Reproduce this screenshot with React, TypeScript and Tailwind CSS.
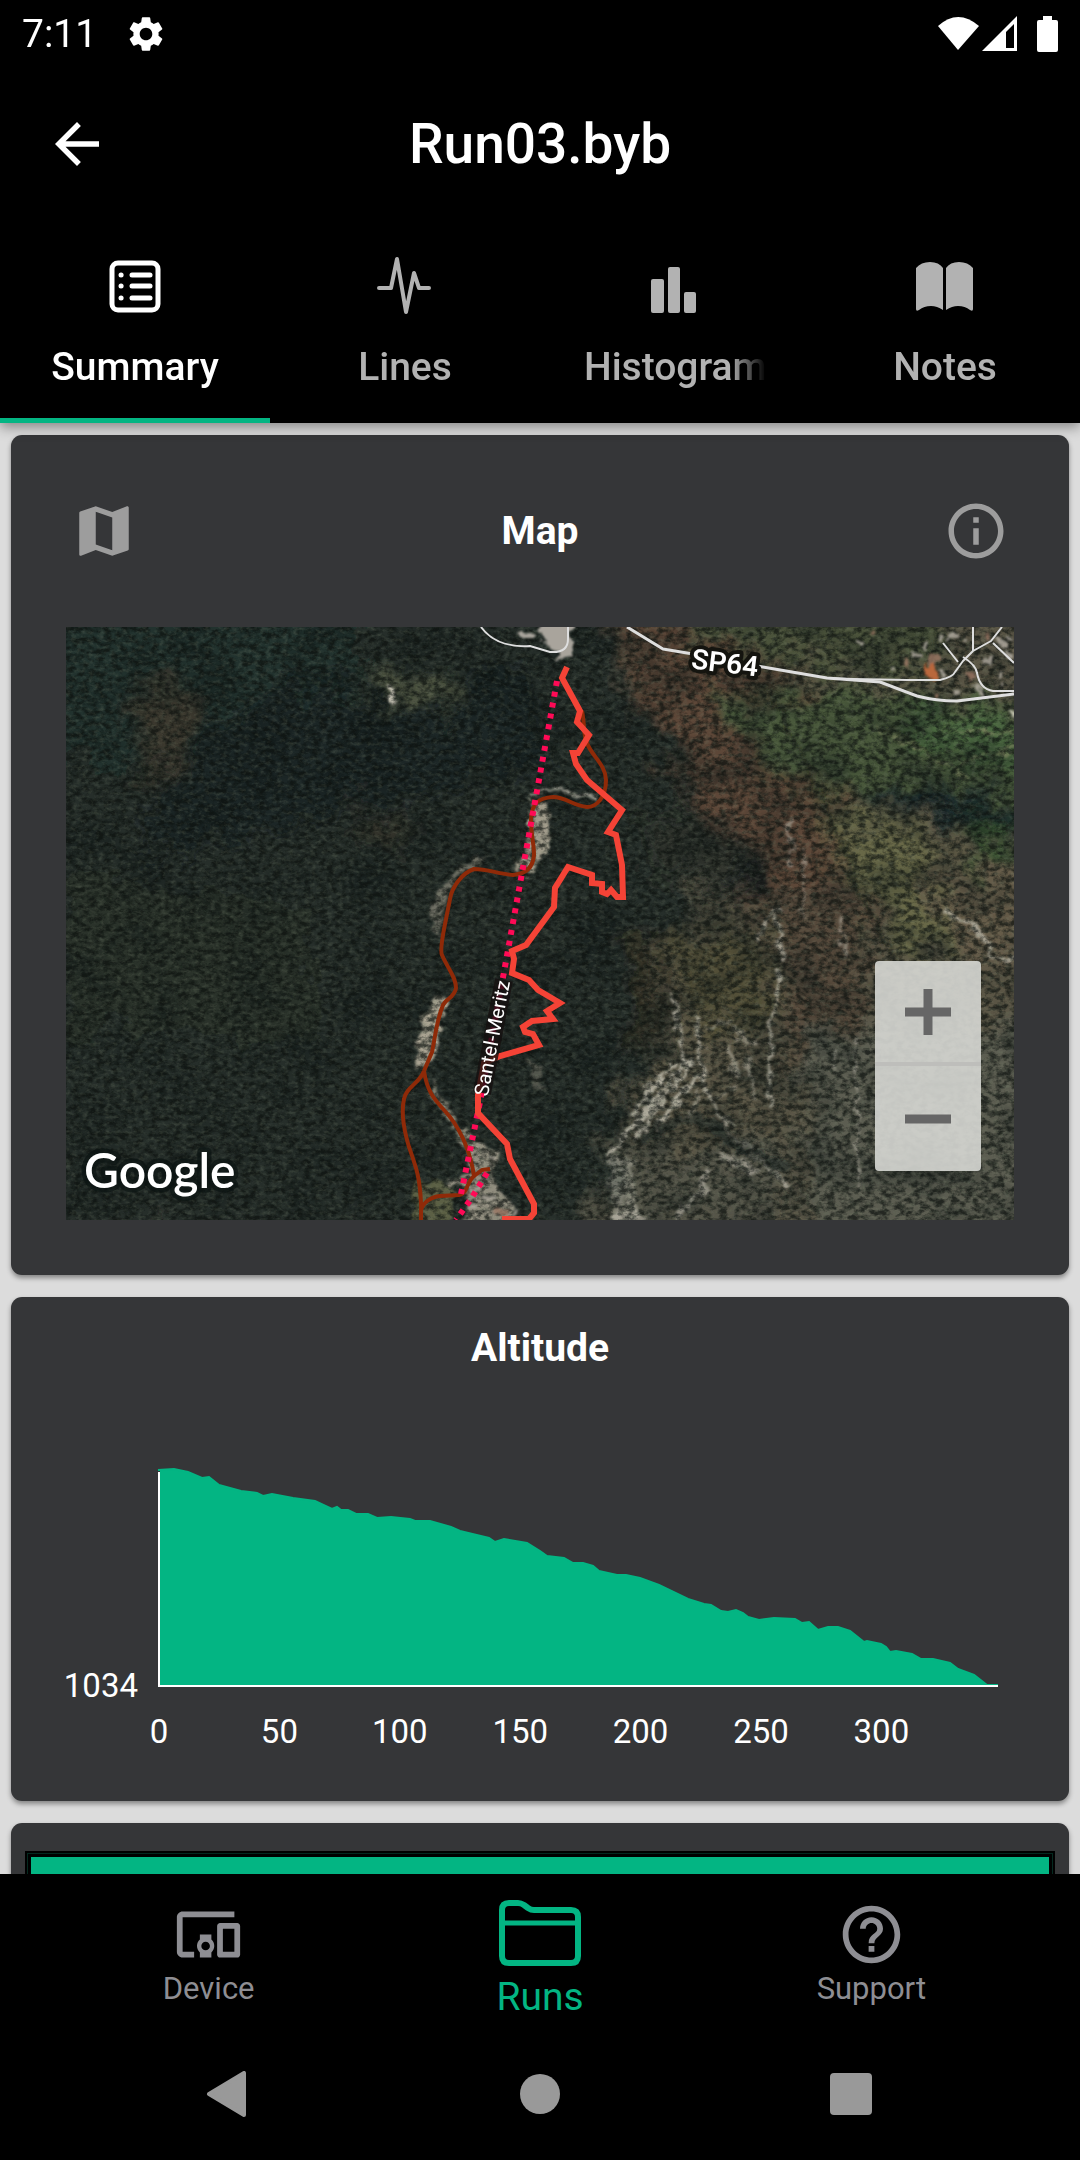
import React, { useState } from 'react';
import { MdArrowBack, MdDevicesOther, MdHelpOutline, MdInfoOutline, MdMap, MdSettings } from 'react-icons/md';

const SummaryIcon = () => (
  <svg className="h-[66px] w-[66px]" viewBox="0 0 66 66" fill="none" stroke="currentColor" strokeLinecap="round">
    <rect x="10" y="10" width="46" height="47" rx="6" strokeWidth="5" />
    {[22, 33, 45].map((y) => (
      <g key={y} strokeWidth="5">
        <path d={`M19 ${y}h.1`} />
        <path d={`M30 ${y}h18`} />
      </g>
    ))}
  </svg>
);

const LinesIcon = () => (
  <svg className="h-[66px] w-[66px]" viewBox="0 0 66 66" fill="none" stroke="currentColor" strokeWidth="4" strokeLinecap="round" strokeLinejoin="round">
    <path d="M7 35H19L25 6L34 59L42 20L47 35H57" />
  </svg>
);

const HistogramIcon = () => (
  <svg className="h-[66px] w-[66px]" viewBox="0 0 66 66" fill="currentColor">
    <rect x="9" y="26" width="13" height="34" rx="2" />
    <rect x="26" y="14" width="12" height="46" rx="2" />
    <rect x="42" y="39" width="12" height="21" rx="2" />
  </svg>
);

const NotesIcon = () => (
  <svg className="h-[66px] w-[66px]" viewBox="0 0 66 66" fill="currentColor">
    <path d="M4 15Q9 9 18 9Q27 9 31 15V57Q25 53 19 53Q12 53 7 57Q4 59 4 56Z" />
    <path d="M34 15Q38 9 47 9Q56 9 61 15V56Q61 59 58 57Q53 53 46 53Q40 53 34 57Z" />
  </svg>
);

const FolderIcon = () => (
  <svg className="h-[72px] w-[84px]" viewBox="0 0 84 72" fill="none" stroke="currentColor" strokeWidth="6" strokeLinejoin="round">
    <path d="M4 13Q4 6 11 6H20Q23 6 26 8L30 11Q33 13 36 13H73Q80 13 80 20V59Q80 66 73 66H11Q4 66 4 59Z" />
    <path d="M4 26H80" strokeWidth="5" />
  </svg>
);

const tabs = [
  { label: 'Summary', icon: <SummaryIcon /> },
  { label: 'Lines', icon: <LinesIcon /> },
  { label: 'Histograms', icon: <HistogramIcon /> },
  { label: 'Notes', icon: <NotesIcon /> },
];

const track =
  'M501 40L496 51L514 84L511 95L523 108L512 126H507L510 137L521 153L556 183L542 205L550 208L556 238L557 270H551L545 263L541 267L536 265V257L526 256V248L502 240L489 261L488 280L460 318L446 324L448 332L446 346L463 353L472 363L494 376L481 384L487 392L466 394L457 400L459 405L467 407L473 418L434 429L418 436L412 468V486L441 517L444 532L468 577V586L463 592H436';

const trails = [
  'M516 84C519 98 517 110 521 116C525 128 540 138 540 153C540 170 531 180 521 180C507 179 500 170 487 170C472 171 466 176 465 192C465 210 468 216 468 228C467 242 458 247 447 248C432 247 422 242 408 242C396 246 386 260 384 272L379 297C376 312 374 324 376 328C382 342 390 350 390 361C389 370 380 372 377 378C370 395 369 412 366 425L358 444',
  'M358 444C354 456 340 460 338 472C334 490 340 510 343 520C350 540 354 550 355 577V593',
  'M358 444C361 464 368 472 378 483C396 502 405 528 408 549C400 556 402 566 393 568L374 569C364 570 357 576 355 583',
  'M408 549L416 543L424 542',
];

const roads = [
  'M415 0C428 18 450 20 464 19L484 25C498 26 502 20 502 12V0',
  'M561 0L597 22L627 27L691 39L761 51L814 55L851 69Q870 74 891 74L948 67',
  'M761 51L787 52L841 53L874 53Q887 50 889 45L897 34L907 24L925 14L936 0',
  'M897 30Q910 38 911 46Q914 62 927 64H948',
  'M907 0V24M927 16L948 36M877 16L892 35',
];

const houses = [
  [862, 30, 9], [872, 8, 6], [846, 26, 7], [884, 6, 6], [918, 6, 7], [930, 12, 8], [940, 24, 8], [856, 16, 6],
  [902, 46, 7], [918, 32, 8], [930, 46, 6], [876, 44, 6], [838, 36, 5], [942, 6, 5], [888, 64, 6], [910, 60, 6],
  [868, 68, 5], [826, 42, 5], [934, 56, 5], [790, 14, 5], [806, 6, 5], [896, 12, 6],
  [408, 560, 7], [420, 566, 6], [430, 582, 8], [404, 578, 6], [446, 584, 5], [422, 528, 5], [398, 562, 6],
];

const SatelliteMap = () => (
  <svg className="block w-full" viewBox="0 0 948 593" role="img" aria-label="Run map">
    <defs>
      <filter id="land" x="-10%" y="-10%" width="120%" height="120%">
        <feGaussianBlur stdDeviation="9" result="soft" />
        <feTurbulence type="fractalNoise" baseFrequency="0.03" numOctaves="4" seed="3" />
        <feDisplacementMap in="soft" scale="60" xChannelSelector="R" yChannelSelector="G" />
      </filter>
      <filter id="rough" x="-20%" y="-20%" width="140%" height="140%">
        <feTurbulence type="fractalNoise" baseFrequency="0.08" numOctaves="4" seed="8" />
        <feDisplacementMap in="SourceGraphic" scale="16" xChannelSelector="R" yChannelSelector="G" />
        <feGaussianBlur stdDeviation="1.2" />
      </filter>
      <filter id="darkGrain" x="0" y="0" width="100%" height="100%" colorInterpolationFilters="sRGB">
        <feTurbulence type="fractalNoise" baseFrequency="0.13 0.18" numOctaves="4" seed="5" />
        <feColorMatrix values="0 0 0 0 0.05  0 0 0 0 0.07  0 0 0 0 0.06  3 0 0 0 -1.1" />
        <feGaussianBlur stdDeviation="0.6" />
      </filter>
      <filter id="lightGrain" x="0" y="0" width="100%" height="100%" colorInterpolationFilters="sRGB">
        <feTurbulence type="fractalNoise" baseFrequency="0.18 0.26" numOctaves="3" seed="14" />
        <feColorMatrix values="0 0 0 0 0.46  0 0 0 0 0.5  0 0 0 0 0.42  0 2.4 0 0 -1.1" />
        <feGaussianBlur stdDeviation="0.6" />
      </filter>
      <filter id="patches" x="0" y="0" width="100%" height="100%" colorInterpolationFilters="sRGB">
        <feTurbulence type="fractalNoise" baseFrequency="0.018 0.025" numOctaves="5" seed="21" />
        <feColorMatrix values="0 0 0 0 0.06  0 0 0 0 0.09  0 0 0 0 0.09  0 0 3 0 -1.3" />
      </filter>
    </defs>

    <rect width="948" height="593" fill="#5a5545" />
    <g filter="url(#land)">
      <path d="M540 -20H700L760 120L800 250L760 330L640 250L590 120Z" fill="#5d4638" />
      <path d="M560 -20H880V40L700 40Z" fill="#4b523a" />
      <path d="M650 70L760 60L980 80V180L800 175L700 150Z" fill="#4a583a" />
      <path d="M820 80L980 90V160L880 130Z" fill="#4b6740" />
      <path d="M770 180L850 155L980 180V205L880 190Z" fill="#18252a" />
      <path d="M900 195H948V240H905Z" fill="#3c5a35" />
      <path d="M750 190L830 190L900 250L880 330L820 310Z" fill="#686747" />
      <path d="M850 240H960V340L900 330Z" fill="#665b4a" />
      <path d="M700 260H800V440H720Z" fill="#56493a" />
      <path d="M610 310L700 300V400H620Z" fill="#525039" />
      <path d="M540 520H720V610H540Z" fill="#54554a" />
      <path d="M740 400H980V610H740Z" fill="#5c5d51" />
      <path d="M-30 -30H530L560 60L620 140L640 220L620 290L596 340L600 420L556 470L530 610H-30Z" fill="#262f29" />
      <path d="M-30 -30H300V60L200 160L-30 130Z" fill="#22332e" />
      <path d="M220 60L460 40L480 140L220 200L80 230V150Z" fill="#1c2725" />
      <path d="M70 60L130 60L130 110L80 170Z" fill="#3a372d" />
      <path d="M300 50L400 55L395 72L310 66Z" fill="#5a6148" />
      <path d="M620 230L710 240L716 280L640 262Z" fill="#1a2224" />
      <path d="M290 180L350 190L340 230L300 220Z" fill="#33312a" />
      <path d="M0 250L240 280V420L0 400Z" fill="#2a322b" />
      <path d="M570 200L640 180L700 235L600 260Z" fill="#33352d" />
      <path d="M560 300L600 320L600 400L570 430Z" fill="#343327" />
    </g>
    <rect width="948" height="593" filter="url(#patches)" opacity="0.4" />

    <g filter="url(#rough)" fill="none" stroke="#c4c0b2" strokeLinecap="round">
      <path d="M621 433L541 530M626 438L560 510M612 434L580 460M620 444L570 512M632 450L590 500M600 444L566 490M622 458L600 488" strokeWidth="4" opacity="0.8" />
      <path d="M607 367L612 400L624 440M631 390Q632 440 641 468L664 507L721 557" strokeWidth="4" opacity="0.7" />
      <path d="M711 281L690 310M714 343L706 400L704 479M712 290L716 330" strokeWidth="4" opacity="0.7" />
      <path d="M640 400L662 394M668 410L690 420M650 470L670 460M655 490L668 495M680 430L690 470M662 424L672 450M668 400L684 412M634 466L622 490" strokeWidth="4" opacity="0.5" />
      <path d="M550 535V600M560 535L566 600" strokeWidth="12" opacity="0.45" />
      <path d="M545 590H580M610 590L640 560L638 545M660 530L690 545" strokeWidth="7" opacity="0.55" />
      <path d="M738 220V290M774 290L778 330M790 410L792 560M724 190V240M768 425L770 440" strokeWidth="2" opacity="0.55" />
      <path d="M880 286L910 300L925 330L948 332" strokeWidth="5" opacity="0.7" />
      <path d="M580 510Q620 480 650 500Q680 530 720 540" stroke="#1c221f" strokeWidth="12" opacity="0.5" />
      <path d="M700 60Q740 130 780 230T850 350M820 100L880 140" stroke="#2b2e22" strokeWidth="3" opacity="0.7" />
      <path d="M888 105H948M895 135L948 122M810 100L900 150" stroke="#78805b" strokeWidth="2" />
      <path d="M326 60V75" strokeWidth="6" />
      <path d="M468 168Q480 160 494 164T528 170" strokeWidth="4" opacity="0.7" />
    </g>
    <g filter="url(#rough)" fill="#b8b09d">
      <path d="M464 172L482 176L482 222L464 250L448 238L460 224Z" opacity="0.85" />
      <path d="M368 366L382 374L366 434L348 446L356 390Z" opacity="0.9" />
      <path d="M364 296Q366 258 400 236L428 230L400 244Q374 268 374 310Z" opacity="0.5" />
      <path d="M364 450L404 512L414 540L396 520L366 470Z" opacity="0.65" />
      <path d="M346 552L386 556L388 600H348Z" fill="#5c6045" />
      <path d="M405 515L432 524L424 552L446 575L446 600H398L404 560L380 556L404 544Z" opacity="0.75" />
      <path d="M340 475L346 510L350 530Z" opacity="0.6" />
      <path d="M462 430L474 440L478 466L464 452Z" opacity="0.3" />
    </g>

    <rect width="948" height="593" filter="url(#darkGrain)" opacity="0.7" />
    <rect width="948" height="593" filter="url(#lightGrain)" opacity="0.28" />

    <g filter="url(#rough)">
      <path d="M474 -6H508V30L488 36L492 26L476 12Z" fill="#a9a49c" />
      <path d="M454 4H468V10H454Z" fill="#a9a49c" />
      {houses.map(([x, y, s], i) => (
        <rect key={i} x={x} y={y} width={s} height={s - 1} fill={i % 4 === 0 ? '#9c7864' : '#b4aea4'} opacity="0.8" />
      ))}
      <rect x="856" y="38" width="15" height="12" fill="#b9683c" />
      <path d="M941 84L950 82V98Z" fill="#c8c8b4" />
    </g>

    <g fill="none" strokeLinejoin="round">
      {roads.map((d, i) => (
        <path key={d} d={d} stroke="#dedede" strokeWidth={i === 1 ? 3 : 2} />
      ))}
      {trails.map((d) => (
        <path key={d} d={d} stroke="#8f2a08" strokeWidth="4" />
      ))}
      <path d="M491 54L440 334L414 475L395 567" stroke="#ff0a56" strokeWidth="6" strokeDasharray="5 6" />
      <path d="M421 546L405 572L390 593" stroke="#ff0a56" strokeWidth="6" strokeDasharray="5 6" />
      <path d={track} stroke="#f44336" strokeWidth="6" strokeLinejoin="miter" />
    </g>

    <path d="M416 466L438 353" stroke="#15100f" strokeWidth="18" opacity="0.8" />
    <g className="font-[Roboto,sans-serif]" fill="#fff" strokeLinejoin="round">
      <text x="426" y="411" fontSize="20" textAnchor="middle" dominantBaseline="central" transform="rotate(-79 426 411)">
        Santel-Meritz
      </text>
      <text x="659" y="36" fontSize="28" fontWeight="600" textAnchor="middle" dominantBaseline="central" transform="rotate(7 659 36)" stroke="#14140f" strokeWidth="8" paintOrder="stroke">
        SP64
      </text>
    </g>
    <text x="18" y="561" fontSize="48" fontWeight="600" className="font-[Lato,sans-serif]" fill="#fff" stroke="#0c1412" strokeOpacity="0.7" strokeWidth="9" strokeLinejoin="round" paintOrder="stroke">
      Google
    </text>
  </svg>
);

const altitude = [
  [92, 40], [108, 39], [122, 42], [136, 48], [143, 47], [153, 55], [175, 61], [191, 63], [197, 66], [206, 64],
  [227, 68], [249, 71], [266, 79], [271, 77], [275, 80], [282, 80], [290, 84], [302, 84], [311, 88], [325, 87],
  [344, 89], [349, 91], [364, 91], [385, 97], [394, 101], [423, 108], [429, 112], [438, 109], [461, 113], [474, 121],
  [481, 126], [498, 128], [507, 133], [517, 133], [527, 136], [533, 141], [551, 145], [560, 145], [574, 148], [593, 155],
  [622, 169], [638, 174], [645, 175], [655, 181], [662, 182], [670, 180], [677, 183], [682, 187], [693, 190], [708, 188],
  [729, 189], [736, 193], [743, 192], [752, 200], [762, 197], [772, 197], [784, 201], [798, 212], [801, 211], [815, 214],
  [820, 217], [824, 222], [830, 221], [846, 224], [855, 229], [867, 229], [884, 233], [892, 239], [908, 245], [921, 255],
  [932, 255],
];

const AltitudeChart = () => {
  const line = altitude.map(([x, y]) => `${x} ${y + 1}`).join('L');
  return (
    <svg className="block w-full overflow-visible font-[Roboto,sans-serif]" viewBox="0 0 948 330" role="img" aria-label="Altitude chart">
      <path d={`M94 256V41L${line}L921 256Z`} fill="#03b583" />
      <path d={`M${line}`} fill="none" stroke="#03b583" strokeWidth="2" />
      <path d="M93 43V257H932" fill="none" stroke="#fff" strokeWidth="2" />
      <g fill="#fff" fontSize="33">
        <text x="72" y="268" textAnchor="end">1034</text>
        {[0, 50, 100, 150, 200, 250, 300].map((v, i) => (
          <text key={v} x={93 + i * 120.4} y="314" textAnchor="middle">{v}</text>
        ))}
      </g>
    </svg>
  );
};

const StatusBar = () => (
  <div className="flex h-[66px] items-center justify-between pl-[22px] pr-[21px] pt-[2px]">
    <div className="flex items-center gap-7">
      <span className="text-[39px] leading-none">7:11</span>
      <MdSettings size={42} />
    </div>
    <svg className="h-[42px] w-[122px]" viewBox="0 0 122 42" fill="currentColor">
      <path d="M1 13Q21 -5 42 13L21 37Z" />
      <path fillRule="evenodd" d="M45 38L80 3V38ZM69 19V35H77V11Z" />
      <path d="M106 3H115V7H119Q121 7 121 9V37Q121 39 119 39H102Q100 39 100 37V9Q100 7 102 7H106Z" />
    </svg>
  </div>
);

const Card = ({ className = '', children }: { className?: string; children?: React.ReactNode }) => (
  <section className={`shrink-0 rounded-[11px] bg-[#353638] shadow-[0_3px_5px_rgba(0,0,0,0.4)] ${className}`}>{children}</section>
);

export default function App() {
  const [active, setActive] = useState('Summary');

  return (
    <div className="flex h-screen flex-col overflow-hidden bg-black font-[Roboto,sans-serif] text-white">
      <header className="z-10 shrink-0 bg-black shadow-[0_4px_12px_rgba(0,0,0,0.4)]">
        <StatusBar />
        <div className="grid h-[156px] grid-cols-[1fr_auto_1fr] items-center px-11">
          <button className="w-[66px]" aria-label="Back">
            <MdArrowBack size={66} />
          </button>
          <h1 className="text-[55px] font-medium leading-none">Run03.byb</h1>
        </div>
        <nav className="grid grid-cols-4">
          {tabs.map((tab) => (
            <button
              key={tab.label}
              onClick={() => setActive(tab.label)}
              className={`flex min-w-0 flex-col items-center border-b-[5px] px-11 pb-[27px] pt-[31px] ${
                active === tab.label ? 'border-[#03b583] text-white' : 'border-transparent text-[#b2b2b2]'
              }`}
            >
              {tab.icon}
              <span
                className={`mt-6 max-w-full overflow-hidden whitespace-nowrap text-[39px] font-medium leading-[48px] ${
                  tab.label === 'Histograms' ? '[mask-image:linear-gradient(to_right,#000_80%,transparent)]' : ''
                }`}
              >
                {tab.label}
              </span>
            </button>
          ))}
        </nav>
      </header>

      <main className="flex min-h-0 flex-1 flex-col gap-[22px] overflow-y-auto bg-[#dcdcdc] px-[11px] pt-3 [scrollbar-width:none]">
        <Card className="px-[55px] pb-[55px] pt-[22px]">
          <div className="flex items-center justify-between pb-[22px]">
            <button className="-mx-3 flex h-[148px] w-[99px] items-center justify-center text-[#9d9d9d]" aria-label="Map type">
              <MdMap size={66} />
            </button>
            <h2 className="text-[39px] font-bold leading-[48px]">Map</h2>
            <button className="-mx-3 flex h-[148px] w-[99px] items-center justify-center text-[#9d9d9d]" aria-label="Info">
              <MdInfoOutline size={66} />
            </button>
          </div>
          <div className="relative">
            <SatelliteMap />
            <div className="absolute bottom-[49px] right-[33px] flex w-[106px] flex-col divide-y-4 divide-[#bebebb] overflow-hidden rounded-[4px] bg-[#d7d8d4]/90">
              <button className="flex h-[105px] items-center justify-center" aria-label="Zoom in">
                <svg className="h-[46px] w-[46px]" viewBox="0 0 46 46" stroke="#666" strokeWidth="9">
                  <path d="M0 23H46M23 0V46" />
                </svg>
              </button>
              <button className="flex h-[105px] items-center justify-center" aria-label="Zoom out">
                <svg className="h-[46px] w-[46px]" viewBox="0 0 46 46" stroke="#666" strokeWidth="9">
                  <path d="M0 23H46" />
                </svg>
              </button>
            </div>
          </div>
        </Card>

        <Card className="px-[55px] pb-[42px] pt-[27px]">
          <h2 className="mb-[57px] text-center text-[39px] font-bold leading-[48px]">Altitude</h2>
          <AltitudeChart />
        </Card>

        <Card className="px-[14px] pt-[28px]">
          <div className="border-2 border-black bg-[#04291f] p-px">
            <div className="h-[300px] border-[3px] border-black bg-[#03b583]" />
          </div>
        </Card>
      </main>

      <footer className="z-10 shrink-0 bg-black">
        <nav className="grid h-[154px] grid-cols-3 px-[43px] text-[#8e8e93]">
          <a href="#device" className="flex flex-col items-center pt-[26px]">
            <MdDevicesOther size={69} />
            <span className="text-[31px] leading-10">Device</span>
          </a>
          <a href="#runs" className="flex flex-col items-center pt-[23px] text-[#03b583]">
            <FolderIcon />
            <span className="text-[39px] leading-[56px]">Runs</span>
          </a>
          <a href="#support" className="flex flex-col items-center pt-[26px]">
            <MdHelpOutline size={69} />
            <span className="text-[31px] leading-10">Support</span>
          </a>
        </nav>
        <div className="grid h-[132px] grid-cols-3 items-center justify-items-center px-[73px] text-[#999]">
          <button aria-label="Back">
            <svg className="h-[46px] w-[46px]" viewBox="0 0 46 46" fill="currentColor" stroke="currentColor" strokeWidth="4" strokeLinejoin="round">
              <path d="M3 23L38 2V44Z" />
            </svg>
          </button>
          <button className="h-10 w-10 rounded-full bg-[#999]" aria-label="Home" />
          <button className="h-[42px] w-[42px] rounded-[4px] bg-[#999]" aria-label="Recent apps" />
        </div>
      </footer>
    </div>
  );
}
